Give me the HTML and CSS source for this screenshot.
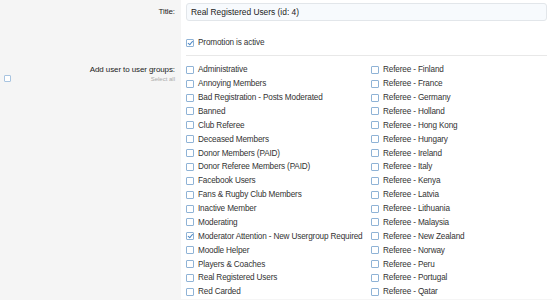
FILE: index.html
```html
<!DOCTYPE html>
<html>
<head>
<meta charset="utf-8">
<link rel="stylesheet" href="styles.css">
</head>
<body>
<div class="form">
  <div class="label title-label">Title:</div>
  <div class="field title-field">
    <div class="input">Real Registered Users (id: 4)</div>
  </div>

  <div class="label"></div>
  <div class="field promo-field">
    <div class="promo-inner">
      <div class="item"><span class="cb checked"></span>Promotion is active</div>
    </div>
  </div>

  <div class="label groups-label">
    <span class="cb small"></span>
    <div class="label-text">
      <div>Add user to user groups:</div>
      <div class="select-all">Select all</div>
    </div>
  </div>
  <div class="field groups-field">
    <div class="col">
      <div class="item"><span class="cb"></span>Administrative</div>
      <div class="item"><span class="cb"></span>Annoying Members</div>
      <div class="item"><span class="cb"></span>Bad Registration - Posts Moderated</div>
      <div class="item"><span class="cb"></span>Banned</div>
      <div class="item"><span class="cb"></span>Club Referee</div>
      <div class="item"><span class="cb"></span>Deceased Members</div>
      <div class="item"><span class="cb"></span>Donor Members (PAID)</div>
      <div class="item"><span class="cb"></span>Donor Referee Members (PAID)</div>
      <div class="item"><span class="cb"></span>Facebook Users</div>
      <div class="item"><span class="cb"></span>Fans &amp; Rugby Club Members</div>
      <div class="item"><span class="cb"></span>Inactive Member</div>
      <div class="item"><span class="cb"></span>Moderating</div>
      <div class="item"><span class="cb checked"></span>Moderator Attention - New Usergroup Required</div>
      <div class="item"><span class="cb"></span>Moodle Helper</div>
      <div class="item"><span class="cb"></span>Players &amp; Coaches</div>
      <div class="item"><span class="cb"></span>Real Registered Users</div>
      <div class="item"><span class="cb"></span>Red Carded</div>
    </div>
    <div class="col">
      <div class="item"><span class="cb"></span>Referee - Finland</div>
      <div class="item"><span class="cb"></span>Referee - France</div>
      <div class="item"><span class="cb"></span>Referee - Germany</div>
      <div class="item"><span class="cb"></span>Referee - Holland</div>
      <div class="item"><span class="cb"></span>Referee - Hong Kong</div>
      <div class="item"><span class="cb"></span>Referee - Hungary</div>
      <div class="item"><span class="cb"></span>Referee - Ireland</div>
      <div class="item"><span class="cb"></span>Referee - Italy</div>
      <div class="item"><span class="cb"></span>Referee - Kenya</div>
      <div class="item"><span class="cb"></span>Referee - Latvia</div>
      <div class="item"><span class="cb"></span>Referee - Lithuania</div>
      <div class="item"><span class="cb"></span>Referee - Malaysia</div>
      <div class="item"><span class="cb"></span>Referee - New Zealand</div>
      <div class="item"><span class="cb"></span>Referee - Norway</div>
      <div class="item"><span class="cb"></span>Referee - Peru</div>
      <div class="item"><span class="cb"></span>Referee - Portugal</div>
      <div class="item"><span class="cb"></span>Referee - Qatar</div>
    </div>
  </div>
</div>
</body>
</html>
```
FILE: styles.css
```css
html, body {
  margin: 0;
  padding: 0;
  background: #f5f5f5;
  font-family: "Liberation Sans", Arial, sans-serif;
  font-size: 8.2px;
  letter-spacing: -0.15px;
  color: #222;
  height: 300px;
  overflow: hidden;
}
.form {
  display: grid;
  grid-template-columns: 181px 1fr;
}
.label {
  background: #f5f5f5;
  text-align: right;
  padding-right: 6px;
  color: #222;
  font-size: 8px;
  letter-spacing: -0.1px;
}
.field {
  background: #fff;
  padding-left: 5px;
  padding-right: 5px;
}
.title-label {
  padding-top: 7px;
}
.title-field {
  padding-top: 3px;
}
.input {
  height: 18px;
  box-sizing: border-box;
  border: 1px solid #e2e6ea;
  border-radius: 3px;
  background: #f7fafd;
  padding: 0 4px;
  line-height: 16px;
  color: #222;
  font-size: 8.4px;
  letter-spacing: 0;
}
.promo-field {
  padding-top: 15px;
}
.promo-inner {
  padding-bottom: 5px;
  border-bottom: 1px solid #e8e8e8;
}
.groups-label {
  display: flex;
  justify-content: space-between;
  padding-top: 9px;
}
.label-text {
  text-align: right;
}
.select-all {
  font-size: 6px;
  color: #aaa;
  margin-top: 2px;
  letter-spacing: 0;
}
.cb.small {
  width: 5px;
  height: 5px;
  margin-left: 4px;
  margin-top: 10px;
  border-color: #a8c4e0;
}
.groups-field {
  display: grid;
  grid-template-columns: 185px 1fr;
  padding-top: 7px;
}
.item {
  display: flex;
  align-items: center;
  height: 13.875px;
  white-space: nowrap;
  color: #333;
}
.cb {
  display: inline-block;
  width: 6px;
  height: 6px;
  border: 1px solid #8fb3d6;
  border-radius: 1px;
  margin-right: 4px;
  flex: none;
  position: relative;
  background: #fff;
}
.cb.checked::after {
  content: "";
  position: absolute;
  left: 1.5px;
  top: 0px;
  width: 2px;
  height: 3.5px;
  border-right: 1px solid #4a86c5;
  border-bottom: 1px solid #4a86c5;
  transform: rotate(40deg);
}
```
